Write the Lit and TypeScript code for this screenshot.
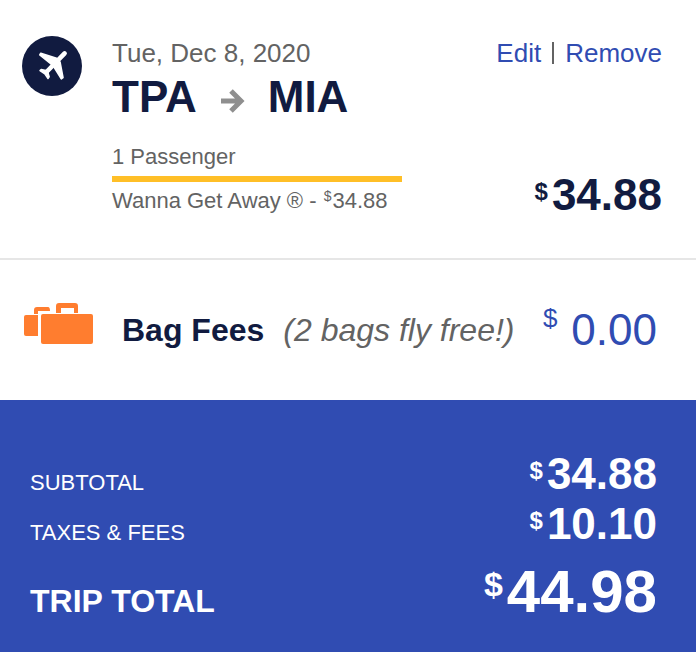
import { LitElement, html, css } from "lit";
import { customElement, property } from "lit/decorators.js";

@customElement("price-amount")
class PriceAmount extends LitElement {
  @property() value = "";
  @property({ reflect: true }) size = "medium";

  static styles = css`
    :host {
      display: block;
      white-space: nowrap;
      font-size: 44px;
      line-height: 38px;
      font-weight: 700;
    }
    .currency {
      font-size: 24px;
      line-height: 0;
      vertical-align: 10px;
      margin-right: 4px;
    }
    :host([size="small"]) {
      display: inline;
      font-size: 22px;
      line-height: 26px;
      font-weight: 400;
    }
    :host([size="small"]) .currency {
      font-size: 14px;
      vertical-align: 7px;
      margin: 0 1px;
    }
    :host([size="large"]) {
      font-size: 60px;
      line-height: 64px;
    }
    :host([size="large"]) .currency {
      font-size: 34px;
      vertical-align: 16px;
    }
    :host([size="light"]) {
      font-weight: 400;
      line-height: 50px;
    }
    :host([size="light"]) .currency {
      font-size: 26px;
      vertical-align: 18px;
      margin-right: 14px;
    }
  `;

  render() {
    return html`<sup class="currency">$</sup><span>${this.value}</span>`;
  }
}

@customElement("app-root")
class AppRoot extends LitElement {
  static styles = css`
    :host {
      display: block;
      font-family: "Liberation Sans", Arial, sans-serif;
      color: #636363;
      background: #fff;
    }
    .flight {
      display: flex;
      align-items: stretch;
      padding: 38px 34px 44px 22px;
      border-bottom: 2px solid #e6e6e6;
    }
    .plane {
      flex: none;
      width: 60px;
      height: 60px;
      margin: -2px 30px 0 0;
    }
    .trip {
      width: 290px;
    }
    .date {
      font-size: 26px;
      line-height: 30px;
    }
    .route {
      display: flex;
      align-items: center;
      margin: 4px 0 0;
      font-size: 44px;
      line-height: 50px;
      font-weight: 700;
      color: #111b40;
    }
    .arrow {
      width: 24px;
      height: 24px;
      margin: 8px 23px 0 24px;
    }
    .passengers {
      margin-top: 22px;
      padding-bottom: 6px;
      border-bottom: 6px solid #ffbf27;
      font-size: 22px;
      line-height: 26px;
    }
    .fare {
      margin-top: 6px;
      font-size: 22px;
      line-height: 26px;
      white-space: nowrap;
    }
    .side {
      flex: 1;
      display: flex;
      flex-direction: column;
      justify-content: space-between;
      align-items: flex-end;
      color: #111b40;
    }
    .actions {
      display: flex;
      align-items: center;
      gap: 11px;
      font-size: 26px;
      line-height: 30px;
    }
    .actions a {
      color: #304cb2;
      text-decoration: none;
    }
    .bar {
      width: 2px;
      height: 22px;
      background: #636363;
    }
    .bags {
      display: flex;
      align-items: center;
      padding: 43px 39px 43px 24px;
      font-size: 32px;
      line-height: 50px;
      white-space: nowrap;
    }
    .luggage {
      flex: none;
      width: 70px;
      height: 42px;
      margin: 0 28px 12px 0;
    }
    .bags h3 {
      margin: 0 19px 0 0;
      font-size: 32px;
      color: #111b40;
    }
    .bags price-amount {
      margin-left: auto;
      color: #304cb2;
    }
    .totals {
      margin: 0;
      padding: 49px 39px 27px 30px;
      background: #304cb2;
      color: #fff;
      font-size: 22px;
    }
    .row {
      display: flex;
      justify-content: space-between;
      align-items: center;
      height: 50px;
    }
    .row dd {
      margin: 0;
    }
    .row dt {
      padding-top: 18px;
    }
    .totals .grand {
      height: 68px;
      margin-top: 9px;
      font-size: 32px;
      font-weight: 700;
    }
  `;

  render() {
    return html`
      <section class="flight">
        <svg class="plane" viewBox="0 0 60 60" aria-hidden="true">
          <circle cx="30" cy="30" r="30" fill="#111b40" />
          <g fill="#fff" stroke="#fff" stroke-linejoin="round" stroke-linecap="round">
            <path d="M42.600 17.400L24.500 36" fill="none" stroke-width="4.600" />
            <path d="M18.800 17.200L34.500 22.300 38 26 41 41.600 39.300 42.800 32 31 29 28 17.800 19z" stroke-width="1.600" />
            <path d="M19.200 33.400L25 34.800 26 36.600 27.200 40.800 26 42.600 22.800 37.800 18 34.600z" stroke-width="1.400" />
          </g>
        </svg>
        <div class="trip">
          <div class="date">Tue, Dec 8, 2020</div>
          <h2 class="route">
            <span>TPA</span>
            <svg class="arrow" viewBox="0 0 24 24" role="img" aria-label="to">
              <path d="M0 12h20M10 2l10 10-10 10" fill="none" stroke="#8f8f8f" stroke-width="5" />
            </svg>
            <span>MIA</span>
          </h2>
          <div class="passengers">1 Passenger</div>
          <div class="fare">
            Wanna Get Away ® - <price-amount size="small" value="34.88"></price-amount>
          </div>
        </div>
        <div class="side">
          <nav class="actions">
            <a href="#edit">Edit</a>
            <span class="bar"></span>
            <a href="#remove">Remove</a>
          </nav>
          <price-amount value="34.88"></price-amount>
        </div>
      </section>

      <section class="bags">
        <svg class="luggage" viewBox="0 0 70 42" fill="#ff7d2f" aria-hidden="true">
          <path d="M2 12H14V33H2Q0 33 0 31V14Q0 12 2 12Z" />
          <path d="M10 11V7Q10 4 13 4H24Q26 4 26 8H14V11Z" />
          <path d="M32 10V3Q32 0 35 0H51Q54 0 54 3V10H50V5H37V10Z" />
          <rect x="17" y="11" width="52" height="30" rx="2" />
        </svg>
        <h3>Bag Fees</h3>
        <em>(2 bags fly free!)</em>
        <price-amount size="light" value="0.00"></price-amount>
      </section>

      <dl class="totals">
        <div class="row">
          <dt>SUBTOTAL</dt>
          <dd><price-amount value="34.88"></price-amount></dd>
        </div>
        <div class="row">
          <dt>TAXES &amp; FEES</dt>
          <dd><price-amount value="10.10"></price-amount></dd>
        </div>
        <div class="row grand">
          <dt>TRIP TOTAL</dt>
          <dd><price-amount size="large" value="44.98"></price-amount></dd>
        </div>
      </dl>
    `;
  }
}
